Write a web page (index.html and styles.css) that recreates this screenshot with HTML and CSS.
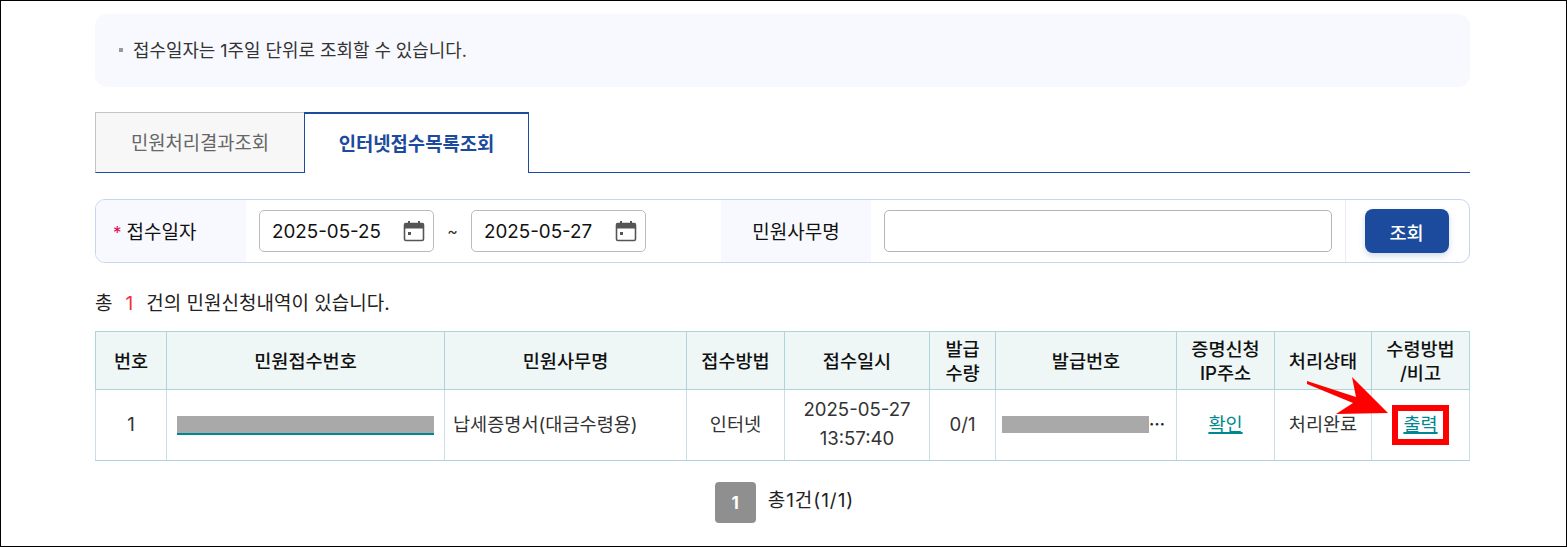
FILE: index.html
```html
<!DOCTYPE html>
<html lang="ko">
<head>
<meta charset="utf-8">
<title>인터넷접수목록조회</title>
<link rel="stylesheet" href="styles.css">
</head>
<body>
<div class="page">
  <div class="notice"><span class="bullet"></span>접수일자는 1주일 단위로 조회할 수 있습니다.</div>
  <div class="tabs">
    <a class="tab">민원처리결과조회</a>
    <a class="tab active">인터넷접수목록조회</a>
  </div>
  <div class="search">
    <div class="label first"><span class="req">*</span>접수일자</div>
    <div class="dates">
      <div class="date"><span>2025-05-25</span>
        <svg class="cal" viewBox="0 0 22 22"><path d="M6 1v4M16 1v4" stroke="#555" stroke-width="2"/><rect x="1.5" y="3.5" width="19" height="17" rx="1.5" fill="none" stroke="#555" stroke-width="1.6"/><rect x="1.5" y="3.5" width="19" height="5" fill="#555"/><rect x="5" y="12" width="3" height="3" fill="#555"/></svg>
      </div>
      <span class="tilde">~</span>
      <div class="date"><span>2025-05-27</span>
        <svg class="cal" viewBox="0 0 22 22"><path d="M6 1v4M16 1v4" stroke="#555" stroke-width="2"/><rect x="1.5" y="3.5" width="19" height="17" rx="1.5" fill="none" stroke="#555" stroke-width="1.6"/><rect x="1.5" y="3.5" width="19" height="5" fill="#555"/><rect x="5" y="12" width="3" height="3" fill="#555"/></svg>
      </div>
    </div>
    <div class="label second">민원사무명</div>
    <div class="field"><div class="textbox"></div></div>
    <div class="action"><button class="btn">조회</button></div>
  </div>
  <p class="summary">총<b class="count">1</b>건의 민원신청내역이 있습니다.</p>
  <table class="grid">
    <colgroup>
      <col class="c1"><col class="c2"><col class="c3"><col class="c4"><col class="c5"><col class="c6"><col class="c7"><col class="c8"><col class="c9"><col class="c10">
    </colgroup>
    <thead>
      <tr><th>번호</th><th>민원접수번호</th><th>민원사무명</th><th>접수방법</th><th>접수일시</th><th>발급<br>수량</th><th>발급번호</th><th>증명신청<br>IP주소</th><th>처리상태</th><th>수령방법<br>/비고</th></tr>
    </thead>
    <tbody>
      <tr>
        <td>1</td>
        <td class="left"><span class="mask linked"></span></td>
        <td class="left">납세증명서(대금수령용)</td>
        <td>인터넷</td>
        <td>2025-05-27<br>13:57:40</td>
        <td>0/1</td>
        <td class="issue"><span class="mask short"></span><span class="dots">⋯</span></td>
        <td><a class="link">확인</a></td>
        <td>처리완료</td>
        <td><a class="link">출력</a></td>
      </tr>
    </tbody>
  </table>
  <div class="pager"><span class="pageno">1</span><span class="pagetext">총1건(1/1)</span></div>
  <div class="redbox"></div>
  <svg class="arrow" viewBox="0 0 100 50"><polygon points="1,6 50,22 46,2 82,38 30,39 47,28 1,9" fill="#ff0000"/></svg>
</div>
</body>
</html>
```
FILE: styles.css
```css
* { box-sizing: border-box; }
html, body { margin: 0; padding: 0; background: #fff; }
body { font-family: Inter, "Noto Sans CJK KR", "Noto Sans", sans-serif; color: #222; font-size: 18.6px; }
.page { position: relative; width: 1567px; height: 547px; border: 1px solid #000; padding: 13px 96px 0 94px; overflow: hidden; }

.notice { height: 73px; background: #f7f9fe; border-radius: 12px; display: flex; align-items: center; padding: 0 0 4px 24px; font-size: 17.9px; color: #333; }
.bullet { width: 4px; height: 4px; background: #999; margin: 3px 10px 0 0; }

.tabs { display: flex; margin-top: 25px; height: 61px; border-bottom: 1px solid #1c4a9c; }
.tab { display: flex; align-items: center; justify-content: center; height: 61px; font-size: 18.8px; padding-bottom: 2px; }
.tab:first-child { width: 209px; background: #f7f7f7; color: #666; border: 1px solid #c4c4c4; border-bottom: 1px solid #1c4a9c; border-right: 0; }
.tab.active { width: 225px; height: 61px; background: #fff; color: #1c4a9c; font-weight: 700; border: 1px solid #1c4a9c; border-top-width: 2px; border-bottom: 0; }

.search { display: flex; margin-top: 26px; height: 64px; border: 1px solid #c5d6ef; border-radius: 10px; overflow: hidden; align-items: stretch; }
.label { display: flex; align-items: center; background: #f7f9fe; color: #111; font-size: 19px; padding-bottom: 2px; }
.label.first { width: 150px; padding-left: 17px; }
.label.second { width: 150px; justify-content: center; }
.req { color: #e6004c; margin: 5px 5px 0 0; font-size: 17px; }
.dates { width: 475px; display: flex; align-items: center; padding-left: 13px; }
.date { width: 175px; height: 42px; border: 1px solid #bbb; border-radius: 5px; display: flex; align-items: center; justify-content: space-between; padding: 0 8px 0 12px; font-size: 18.8px; color: #111; }
.cal { width: 22px; height: 22px; }
.tilde { width: 37px; text-align: center; font-size: 16px; color: #333; }
.field { flex: 1; display: flex; align-items: center; padding: 0 13px 0 13px; }
.textbox { width: 100%; height: 42px; border: 1px solid #b5b5b5; border-radius: 5px; }
.action { width: 124px; border-left: 1px solid #e8eef8; display: flex; align-items: center; justify-content: center; }
.btn { width: 84px; height: 44px; margin-right: 2px; background: #1c4a9c; color: #fff; font: 500 18.6px Inter, "Noto Sans CJK KR", sans-serif; border: 0; border-radius: 8px; box-shadow: 0 3px 6px rgba(28,74,156,.2); }

.summary { margin: 29px 0 0; height: 26px; line-height: 24px; font-size: 19px; color: #222; }
.count { color: #f0323c; font-weight: 400; margin: 0 13px; }

.grid { margin-top: 13px; width: 1374px; table-layout: fixed; border-collapse: collapse; border: 1px solid #b0d4db; font-size: 18.6px; }
.c1 { width: 71px; } .c2 { width: 278px; } .c3 { width: 242px; } .c4 { width: 98px; } .c5 { width: 145px; }
.c6 { width: 66px; } .c7 { width: 181px; } .c8 { width: 98px; } .c9 { width: 97px; } .c10 { width: 98px; }
th { height: 58px; background: #eef7f6; font-weight: 500; color: #111; border: 1px solid #b0d4db; line-height: 24px; padding: 0; font-size: 18.6px; }
td { height: 71px; text-align: center; border: 1px solid #c8e0e5; border-bottom-color: #b0d4db; line-height: 29px; padding: 0 0 2px; color: #333; }
td.left { text-align: left; padding-left: 8px; }
td:nth-child(2) { padding-left: 10px; }
.mask { display: inline-block; background: #a9a9a9; height: 17px; vertical-align: middle; }
.mask.linked { width: 257px; height: 19px; border-bottom: 2px solid #008891; }
.mask.short { width: 147px; }
.issue { text-align: left; padding-left: 6px; white-space: nowrap; }
.dots { font-size: 16px; font-weight: 700; vertical-align: middle; color: #222; }
.link { color: #008891; text-decoration: underline; text-decoration-thickness: 2px; }

.pager { display: flex; justify-content: center; align-items: center; margin-top: 21px; padding-left: 4px; gap: 12px; }
.pageno { width: 41px; height: 41px; background: #8f8f8f; color: #fff; font-weight: 700; border-radius: 4px; display: flex; align-items: center; justify-content: center; font-size: 17px; }
.pagetext { font-size: 19px; letter-spacing: .95px; margin-top: -8px; }

.redbox { position: absolute; left: 1391px; top: 404px; width: 57px; height: 40px; border: 6px solid #f00; }
.arrow { position: absolute; left: 1305px; top: 374px; width: 100px; height: 50px; }
```
